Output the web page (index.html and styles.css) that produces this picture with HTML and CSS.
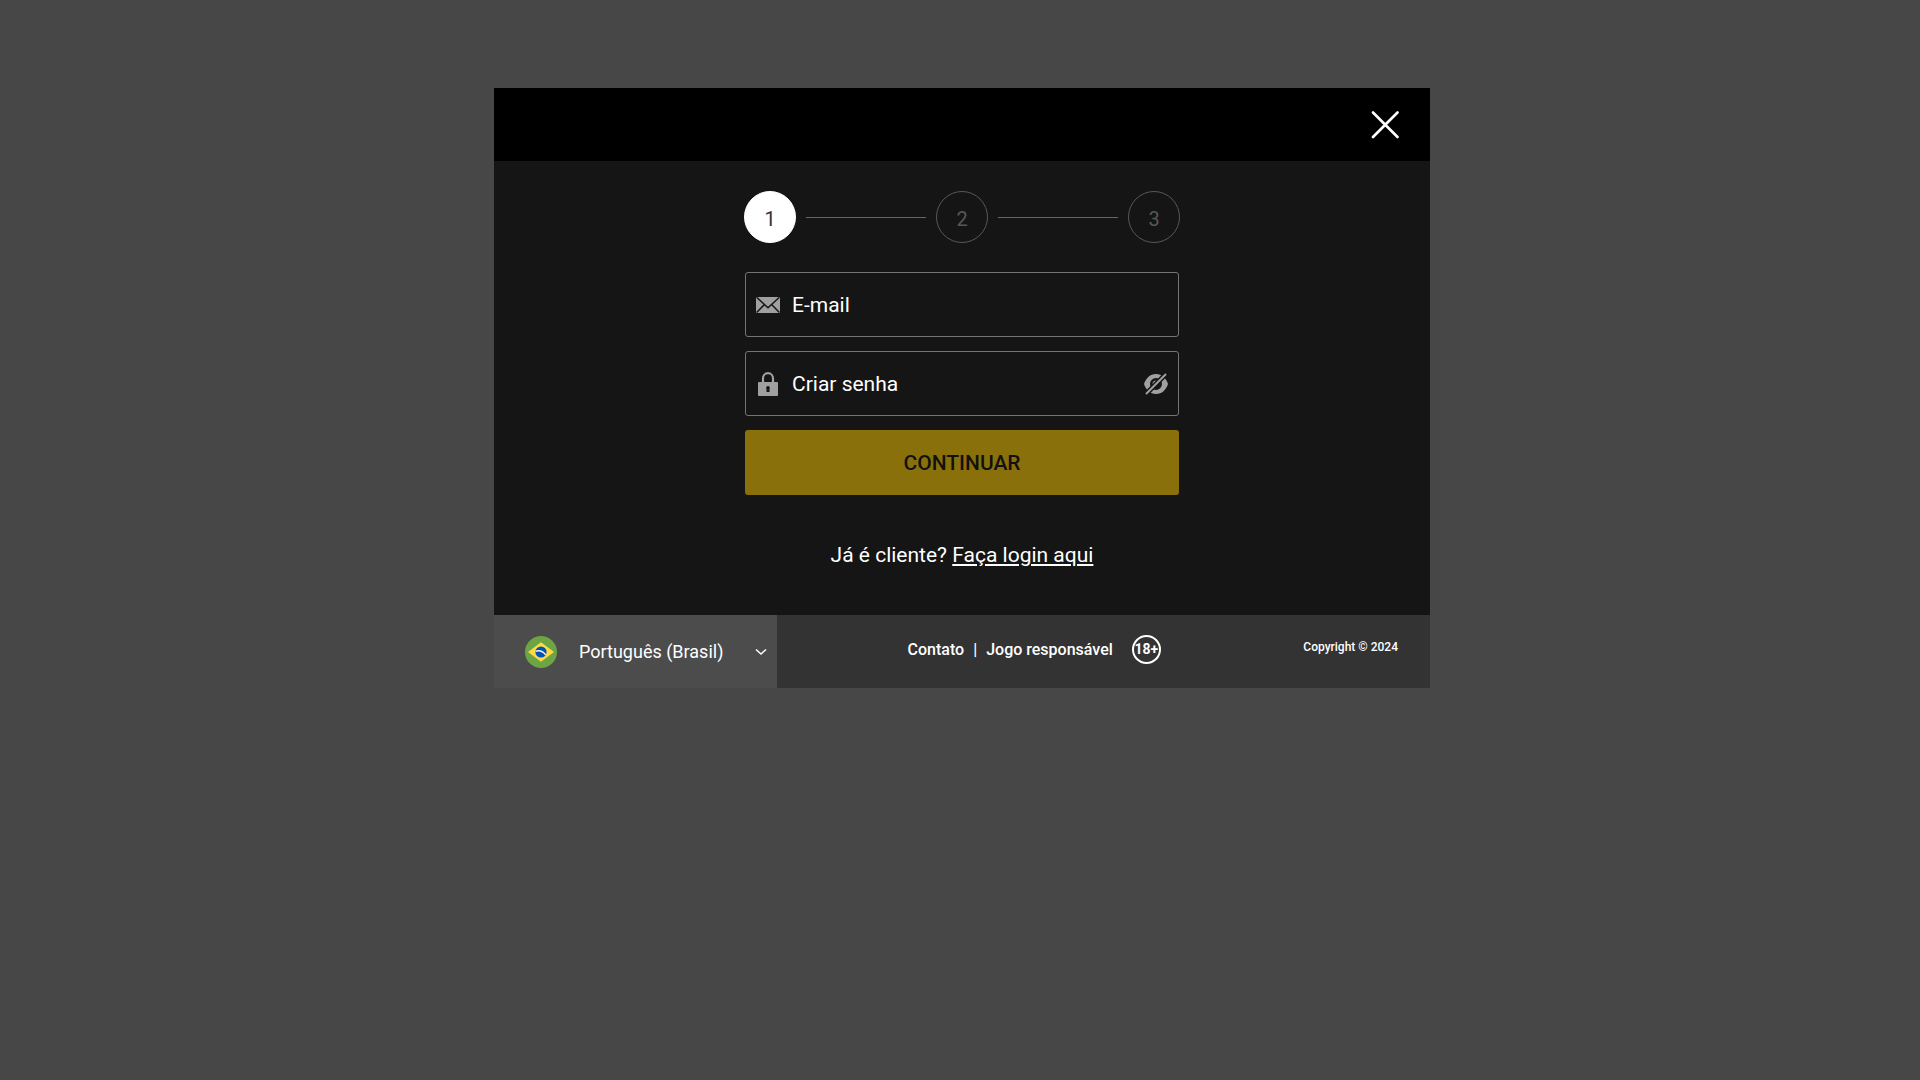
FILE: index.html
```html
<!DOCTYPE html>
<html lang="pt-BR">
<head>
<meta charset="utf-8">
<meta name="viewport" content="width=device-width, initial-scale=1">
<title>Cadastro</title>
<link rel="stylesheet" href="styles.css">
</head>
<body>
<main class="modal">
  <header class="modal-header">
    <button class="close" type="button" aria-label="Fechar">
      <svg viewBox="0 0 28 28" width="28" height="28" fill="none" stroke="#fff" stroke-width="2.6" stroke-linecap="round"><path d="M2 1.500 26.500 26M26.500 1.500 2 26"/></svg>
    </button>
  </header>
  <section class="modal-body">
    <ol class="steps">
      <li class="step step-active" aria-current="step">1</li>
      <li class="step-line" role="presentation"></li>
      <li class="step">2</li>
      <li class="step-line" role="presentation"></li>
      <li class="step">3</li>
    </ol>
    <form class="form">
      <label class="field">
        <svg class="field-icon" viewBox="0 0 24 24" width="24" height="24">
          <path fill="#a0a0a0" d="M0 4h24v16H0z"/>
          <path fill="none" stroke="#151515" stroke-width="1.5" d="M.6 4.2 12 14.8 23.4 4.2M.6 19.6 8.4 11.6M23.4 19.6 15.6 11.6"/>
        </svg>
        <input class="field-input" type="email" placeholder="E-mail" aria-label="E-mail">
      </label>
      <div class="field">
        <svg class="field-icon" viewBox="0 0 24 24" width="24" height="24">
          <path fill="none" stroke="#a0a0a0" stroke-width="2.2" d="M7 11V6.200a5 5 0 0 1 10 0V11"/>
          <path fill="#a0a0a0" fill-rule="evenodd" d="M3 10h18a1 1 0 0 1 1 1v12a1 1 0 0 1-1 1H3a1 1 0 0 1-1-1V11a1 1 0 0 1 1-1zm9 4a2 2 0 0 0-1.500 3v3h3v-3A2 2 0 0 0 12 14z"/>
        </svg>
        <input class="field-input" type="password" placeholder="Criar senha" aria-label="Criar senha">
        <button class="reveal" type="button" aria-label="Mostrar senha">
          <svg viewBox="0 0 24 24" width="24" height="24">
            <path fill="#a0a0a0" fill-rule="evenodd" d="M12 2C6 2 2 6 0 12c2 6 6 10 12 10s10-4 12-10C22 6 18 2 12 2zm0 4a6 6 0 1 1 0 12 6 6 0 0 1 0-12z"/>
            <path fill="#a0a0a0" d="M12 8.500A3.500 3.500 0 0 0 8.500 12v3.500L15.500 8.500z"/>
            <path stroke="#151515" stroke-width="5" d="M0 24 24 0"/>
            <path stroke="#a0a0a0" stroke-width="2" d="M2 22 22 2"/>
          </svg>
        </button>
      </div>
      <button class="submit" type="submit">CONTINUAR</button>
    </form>
    <p class="login">Já é cliente? <a href="#login">Faça login aqui</a></p>
  </section>
  <footer class="modal-footer">
    <div class="language">
      <svg class="flag" viewBox="0 0 32 32" width="32" height="32" aria-hidden="true">
        <circle cx="16" cy="16" r="16" fill="#6da544"/>
        <path fill="#ffda44" d="M16 6.300 29 16 16 25.700 3 16z"/>
        <circle cx="16" cy="16" r="5.600" fill="#0052b4"/>
        <path fill="none" stroke="#f0f0f0" stroke-width="1.500" d="M10.600 15.200c3.500-.9 7.500.3 10 3.600"/>
      </svg>
      <select class="language-select" aria-label="Idioma"><option>Português (Brasil)</option></select>
      <svg class="chevron" viewBox="0 0 12 8" width="12" height="8" fill="none" stroke="#fff" stroke-width="1.500" aria-hidden="true"><path d="m1 1.500 5 4.500 5-4.500"/></svg>
    </div>
    <nav class="links">
      <a href="#contato">Contato</a>
      <span>|</span>
      <a href="#jogo-responsavel">Jogo responsável</a>
      <span class="age">18+</span>
    </nav>
    <small class="copyright">Copyright © 2024</small>
  </footer>
</main>
</body>
</html>
```
FILE: styles.css
```css
* {
  box-sizing: border-box;
}

body {
  margin: 0;
  padding: 88px 16px 88px 20px;
  background: #474747;
  color: #fff;
  font-family: Roboto, "Liberation Sans", sans-serif;
  font-size: 21px;
  line-height: 24px;
}

button,
input,
select {
  margin: 0;
  padding: 0;
  border: 0;
  background: none;
  color: inherit;
  font: inherit;
}

button,
select {
  cursor: pointer;
}

svg {
  display: block;
  flex: none;
}

a {
  color: inherit;
}

.modal {
  max-width: 936px;
  margin: 0 auto;
  background: #151515;
}

.modal-header {
  display: flex;
  justify-content: flex-end;
  align-items: center;
  min-height: 73px;
  padding: 0 31px;
  background: #000;
}

.modal-body {
  display: flex;
  flex-direction: column;
  align-items: center;
  padding: 30px 16px 48px;
}

.steps {
  display: flex;
  align-items: center;
  gap: 10px;
  width: 100%;
  max-width: 436px;
  margin: 0 0 29px;
  padding: 0;
  list-style: none;
}

.step {
  flex: none;
  width: 52px;
  height: 52px;
  border: 1px solid #585858;
  border-radius: 50%;
  color: #585858;
  font-size: 20px;
  line-height: 54px;
  text-align: center;
}

.step-active {
  border-color: #fff;
  background: #fff;
  color: #333;
}

.step-line {
  flex: 1;
  height: 1px;
  background: #666;
}

.form {
  display: flex;
  flex-direction: column;
  gap: 14px;
  width: 100%;
  max-width: 434px;
}

.field {
  display: flex;
  align-items: center;
  gap: 12px;
  height: 65px;
  padding: 0 10px;
  border: 1px solid #747474;
  border-radius: 3px;
}

.field-input {
  flex: 1;
  min-width: 0;
  height: 100%;
  outline: 0;
}

.field-input::placeholder {
  color: #fff;
  opacity: 1;
}

.submit {
  height: 65px;
  border-radius: 3px;
  background: #8a700a;
  color: #111;
  font-weight: 500;
}

.login {
  margin: 48px 0 0;
}

.modal-footer {
  display: flex;
  min-height: 73px;
  background: #333;
  font-weight: 500;
}

.language {
  display: flex;
  align-items: center;
  width: 283px;
  padding: 0 10px 0 31px;
  background: #4c4c4c;
  font-size: 18px;
  font-weight: 400;
}

.flag {
  margin-right: 22px;
}

.language-select {
  flex: 1;
  min-width: 0;
  appearance: none;
}

.links {
  display: flex;
  flex: 1;
  align-items: center;
  justify-content: center;
  gap: 9px;
  padding: 0 12px 4px 0;
  font-size: 16px;
}

.links a {
  text-decoration: none;
}

.age {
  width: 29px;
  height: 29px;
  margin-left: 10px;
  border: 2px solid #fff;
  border-radius: 50%;
  font-size: 14px;
  font-weight: 700;
  text-align: center;
}

.copyright {
  padding: 20px 32px 0 0;
  font-size: 12px;
}
```
